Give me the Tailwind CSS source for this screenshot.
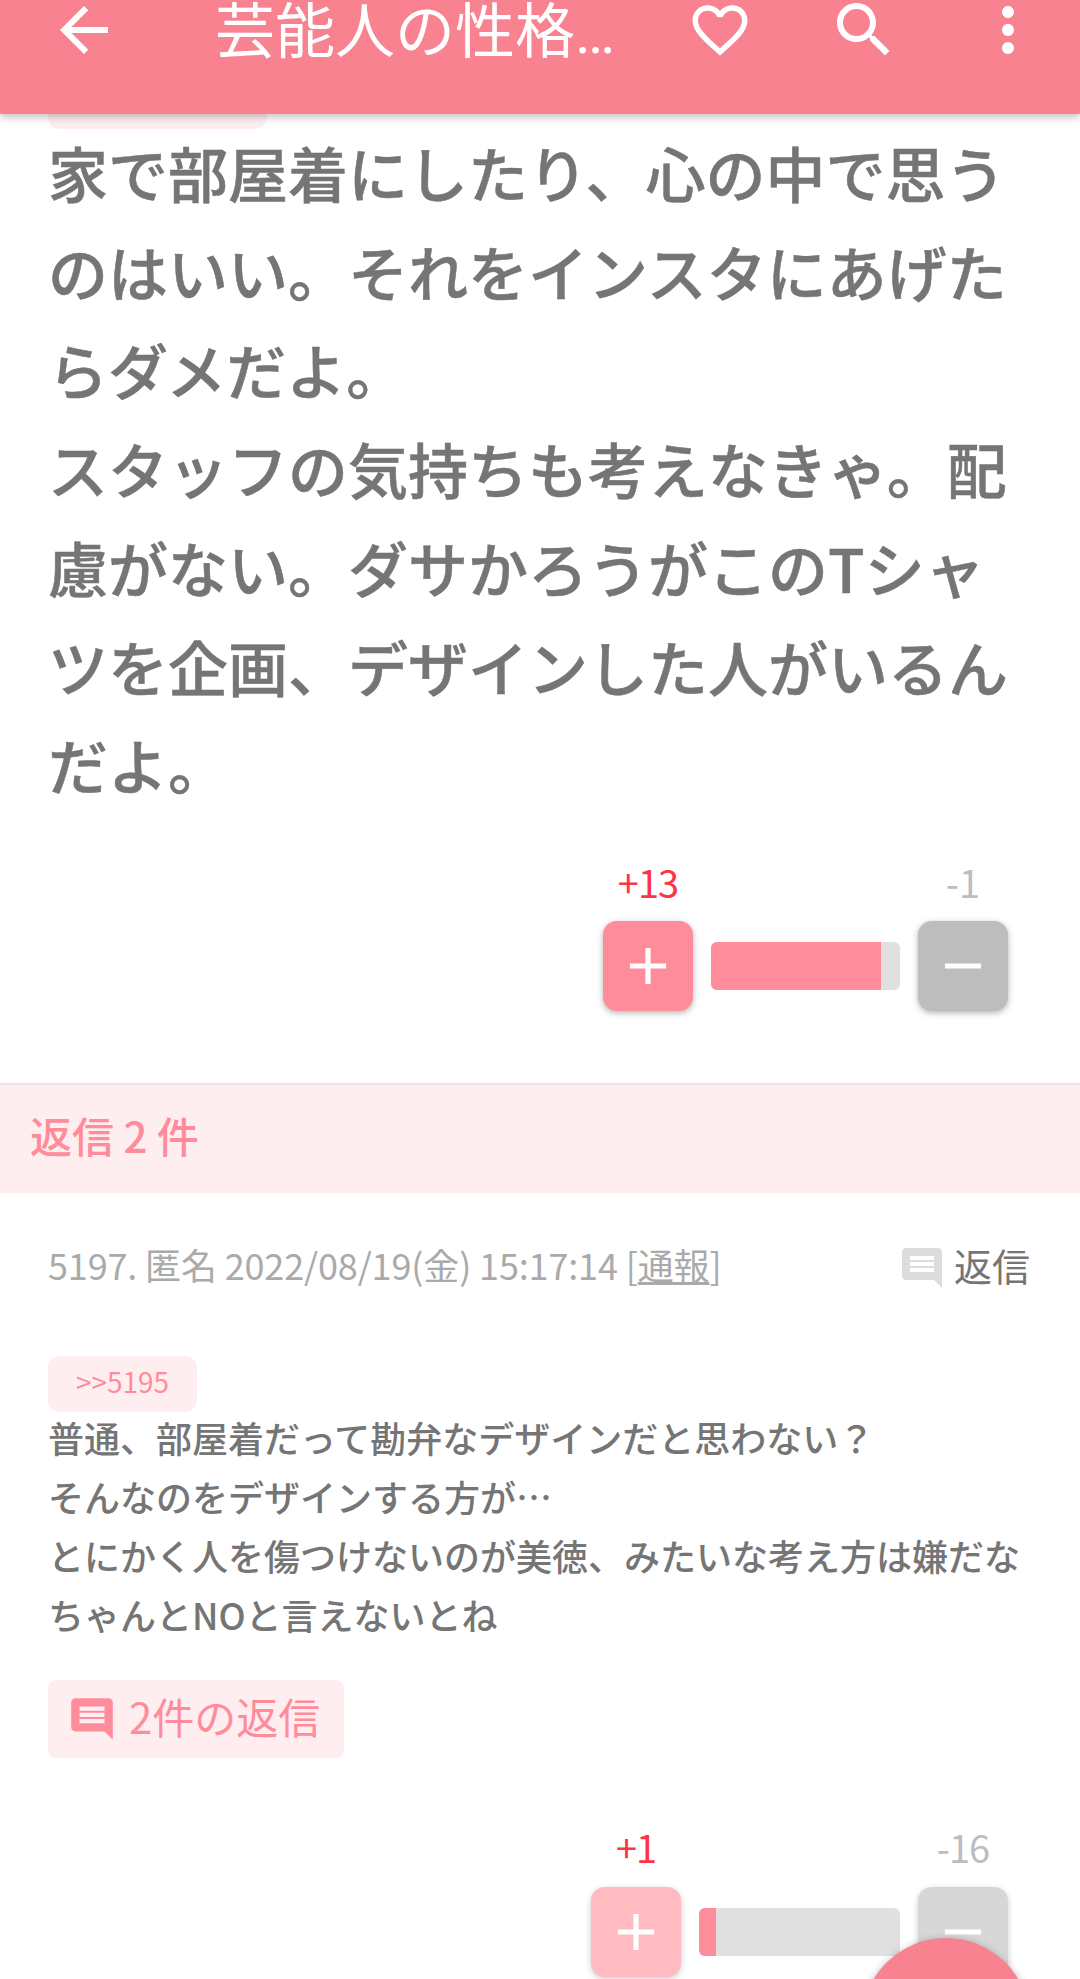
<!DOCTYPE html>
<html lang="ja">
<head>
<meta charset="UTF-8">
<meta name="viewport" content="width=device-width, initial-scale=1.0">
<title>芸能人の性格</title>
<script src="https://cdn.jsdelivr.net/npm/@tailwindcss/browser@4"></script>
</head>
<body class="bg-white">
<div class="relative w-[1080px] h-[1979px] overflow-hidden bg-white font-['Noto_Sans_CJK_JP',sans-serif]">
  <!-- app bar -->
  <header class="relative z-10 h-[114px] bg-[#f8828f] shadow-[0_3px_8px_rgba(0,0,0,0.25)] flow-root">
    <div class="flex items-center h-[72px] -mt-[6px] pl-[48px] text-white">
      <svg class="w-[72px] h-[72px] fill-white shrink-0" viewBox="0 0 24 24"><path d="M20 11H7.83l5.59-5.59L12 4l-8 8 8 8 1.41-1.41L7.83 13H20v-2z"/></svg>
      <div class="ml-[95px] w-[472px] text-[60px] leading-[72px] whitespace-nowrap">芸能人の性格<span class="font-['Roboto']">…</span></div>
      <svg class="w-[66px] h-[66px] fill-white shrink-0" viewBox="0 0 24 24"><path d="M16.5 3c-1.74 0-3.41.81-4.5 2.09C10.91 3.81 9.24 3 7.5 3 4.42 3 2 5.42 2 8.5c0 3.78 3.4 6.86 8.55 11.54L12 21.35l1.45-1.32C18.6 15.36 22 12.28 22 8.5 22 5.42 19.58 3 16.5 3zm-4.4 15.55l-.1.1-.1-.1C7.14 14.24 4 11.39 4 8.5 4 6.5 5.5 5 7.5 5c1.54 0 3.04.99 3.57 2.36h1.87C13.46 5.99 14.96 5 16.5 5c2 0 3.5 1.5 3.5 3.5 0 2.89-3.14 5.74-7.9 10.05z"/></svg>
      <svg class="ml-[75px] w-[72px] h-[72px] fill-white shrink-0" viewBox="0 0 24 24"><path d="M15.5 14h-.79l-.28-.27C15.41 12.59 16 11.11 16 9.5 16 5.91 13.09 3 9.5 3S3 5.91 3 9.5 5.91 16 9.5 16c1.61 0 3.09-.59 4.23-1.57l.27.28v.79l5 4.99L20.49 19l-4.99-5zm-6 0C7.01 14 5 11.99 5 9.5S7.01 5 9.5 5 14 7.01 14 9.5 11.99 14 9.5 14z"/></svg>
      <svg class="ml-[72px] w-[72px] h-[72px] fill-white shrink-0" viewBox="0 0 24 24"><path d="M12 8c1.1 0 2-.9 2-2s-.9-2-2-2-2 .9-2 2 .9 2 2 2zm0 2c-1.1 0-2 .9-2 2s.9 2 2 2 2-.9 2-2-.9-2-2-2zm0 6c-1.1 0-2 .9-2 2s.9 2 2 2 2-.9 2-2-.9-2-2-2z"/></svg>
    </div>
  </header>

  <!-- parent comment, scrolled under the bar -->
  <div class="ml-[48px] w-[219px] h-[15px] bg-[#ffeef0] rounded-b-[12px]"></div>
  <p class="px-[48px] -mt-[6px] text-[60px] leading-[98.7px] font-medium [-webkit-text-stroke:0.5px_#757575] text-[#757575]">家で部屋着にしたり、心の中で思うのはいい。それをインスタにあげたらダメだよ。<br>スタッフの気持ちも考えなきゃ。配慮がない。ダサかろうがこのTシャツを企画、デザインした人がいるんだよ。</p>

  <div class="flex justify-end items-end gap-[18px] pr-[72px] mt-[45px]">
    <div class="flex flex-col items-center gap-[14px]">
      <span class="pb-[3px] text-[38px] leading-[45px] tracking-[-1px] text-[#ff3347]">+13</span>
      <div class="w-[90px] h-[90px] rounded-[14px] bg-[#ff8c9a] shadow-[0_2px_6px_rgba(0,0,0,0.3)] flex items-center justify-center">
        <svg class="w-[62px] h-[62px] fill-white" viewBox="0 0 24 24"><path d="M19 13h-6v6h-2v-6H5v-2h6V5h2v6h6v2z"/></svg>
      </div>
    </div>
    <div class="w-[189px] h-[48px] mb-[21px] rounded-[6px] bg-[#e0e0e0] overflow-hidden">
      <div class="h-full bg-[#ff8c9a]" style="width:90%"></div>
    </div>
    <div class="flex flex-col items-center gap-[14px]">
      <span class="pb-[3px] text-[38px] leading-[45px] text-[#bdbdbd]">-1</span>
      <div class="w-[90px] h-[90px] rounded-[14px] bg-[#bdbdbd] shadow-[0_2px_6px_rgba(0,0,0,0.3)] flex items-center justify-center">
        <svg class="w-[62px] h-[62px] fill-white" viewBox="0 0 24 24"><path d="M19 13H5v-2h14v2z"/></svg>
      </div>
    </div>
  </div>

  <!-- replies band -->
  <div class="mt-[72px] h-[110px] border-t-2 border-[#e4e4e4] bg-[#ffeef0] pl-[30px] flex items-center">
    <span class="pb-[8px] text-[42px] font-medium text-[#ff8c9a]">返信 2 件</span>
  </div>

  <!-- reply -->
  <div class="flex items-center justify-between mt-[48px] pl-[48px] pr-[50px] h-[52px]">
    <div class="pb-[6px] text-[36px] leading-[52px] tracking-[-0.15px] text-[#aaaaaa]">5197. 匿名 2022/08/19(金) 15:17:14 [<span class="underline">通報</span>]</div>
    <div class="flex items-center gap-[8px]">
      <svg class="mt-[3px] w-[48px] h-[48px] fill-[#dcdcdc]" viewBox="0 0 24 24"><path d="M21.99 4c0-1.1-.89-2-1.99-2H4c-1.1 0-2 .9-2 2v12c0 1.1.9 2 2 2h14l4 4-.01-18zM18 14H6v-2h12v2zm0-3H6V9h12v2zm0-3H6V6h12v2z"/></svg>
      <span class="pb-[4px] text-[38px] leading-[52px] text-[#757575]">返信</span>
    </div>
  </div>

  <div class="mt-[63px] ml-[48px] w-[149px] h-[56px] rounded-[12px] bg-[#ffeef0] flex items-center justify-center pb-[6px] text-[28px] text-[#ff8c9a]">&gt;&gt;5195</div>
  <p class="px-[48px] mt-[-4px] text-[36px] leading-[59px] font-medium text-[#757575]">普通、部屋着だって勘弁なデザインだと思わない？<br>そんなのをデザインする方が…<br>とにかく人を傷つけないのが美徳、みたいな考え方は嫌だな<br>ちゃんとNOと言えないとね</p>

  <div class="mt-[36px] ml-[48px] w-[296px] h-[78px] rounded-[8px] bg-[#ffeef0] flex items-center pl-[19px] gap-[12px]">
    <svg class="w-[50px] h-[50px] fill-[#ff8c9a] shrink-0" viewBox="0 0 24 24"><path d="M21.99 4c0-1.1-.89-2-1.99-2H4c-1.1 0-2 .9-2 2v12c0 1.1.9 2 2 2h14l4 4-.01-18zM18 14H6v-2h12v2zm0-3H6V9h12v2zm0-3H6V6h12v2z"/></svg>
    <span class="pb-[6px] text-[42px] text-[#ff8c9a]">2件の返信</span>
  </div>

  <div class="flex justify-end items-end gap-[18px] pr-[72px] mt-[66px]">
    <div class="flex flex-col items-center gap-[15px]">
      <span class="pb-[3px] text-[38px] leading-[45px] tracking-[-1px] text-[#ff3347]">+1</span>
      <div class="w-[90px] h-[90px] rounded-[14px] bg-[#ffbac2] shadow-[0_2px_6px_rgba(0,0,0,0.2)] flex items-center justify-center">
        <svg class="w-[62px] h-[62px] fill-white" viewBox="0 0 24 24"><path d="M19 13h-6v6h-2v-6H5v-2h6V5h2v6h6v2z"/></svg>
      </div>
    </div>
    <div class="w-[201px] h-[48px] mb-[21px] rounded-[6px] bg-[#e0e0e0] overflow-hidden">
      <div class="h-full bg-[#ff8c9a]" style="width:8.5%"></div>
    </div>
    <div class="flex flex-col items-center gap-[15px]">
      <span class="pb-[3px] text-[38px] leading-[45px] tracking-[-1px] text-[#bdbdbd]">-16</span>
      <div class="w-[90px] h-[90px] rounded-[14px] bg-[#d7d7d7] shadow-[0_2px_6px_rgba(0,0,0,0.2)] flex items-center justify-center">
        <svg class="w-[62px] h-[62px] fill-white" viewBox="0 0 24 24"><path d="M19 13H5v-2h14v2z"/></svg>
      </div>
    </div>
  </div>

  <!-- floating button, cut by the screen edge -->
  <div class="absolute left-[862px] top-[1938px] w-[168px] h-[168px] rounded-full bg-[#f8828f] shadow-[0_2px_8px_rgba(0,0,0,0.3)]"></div>
</div>
</body>
</html>
